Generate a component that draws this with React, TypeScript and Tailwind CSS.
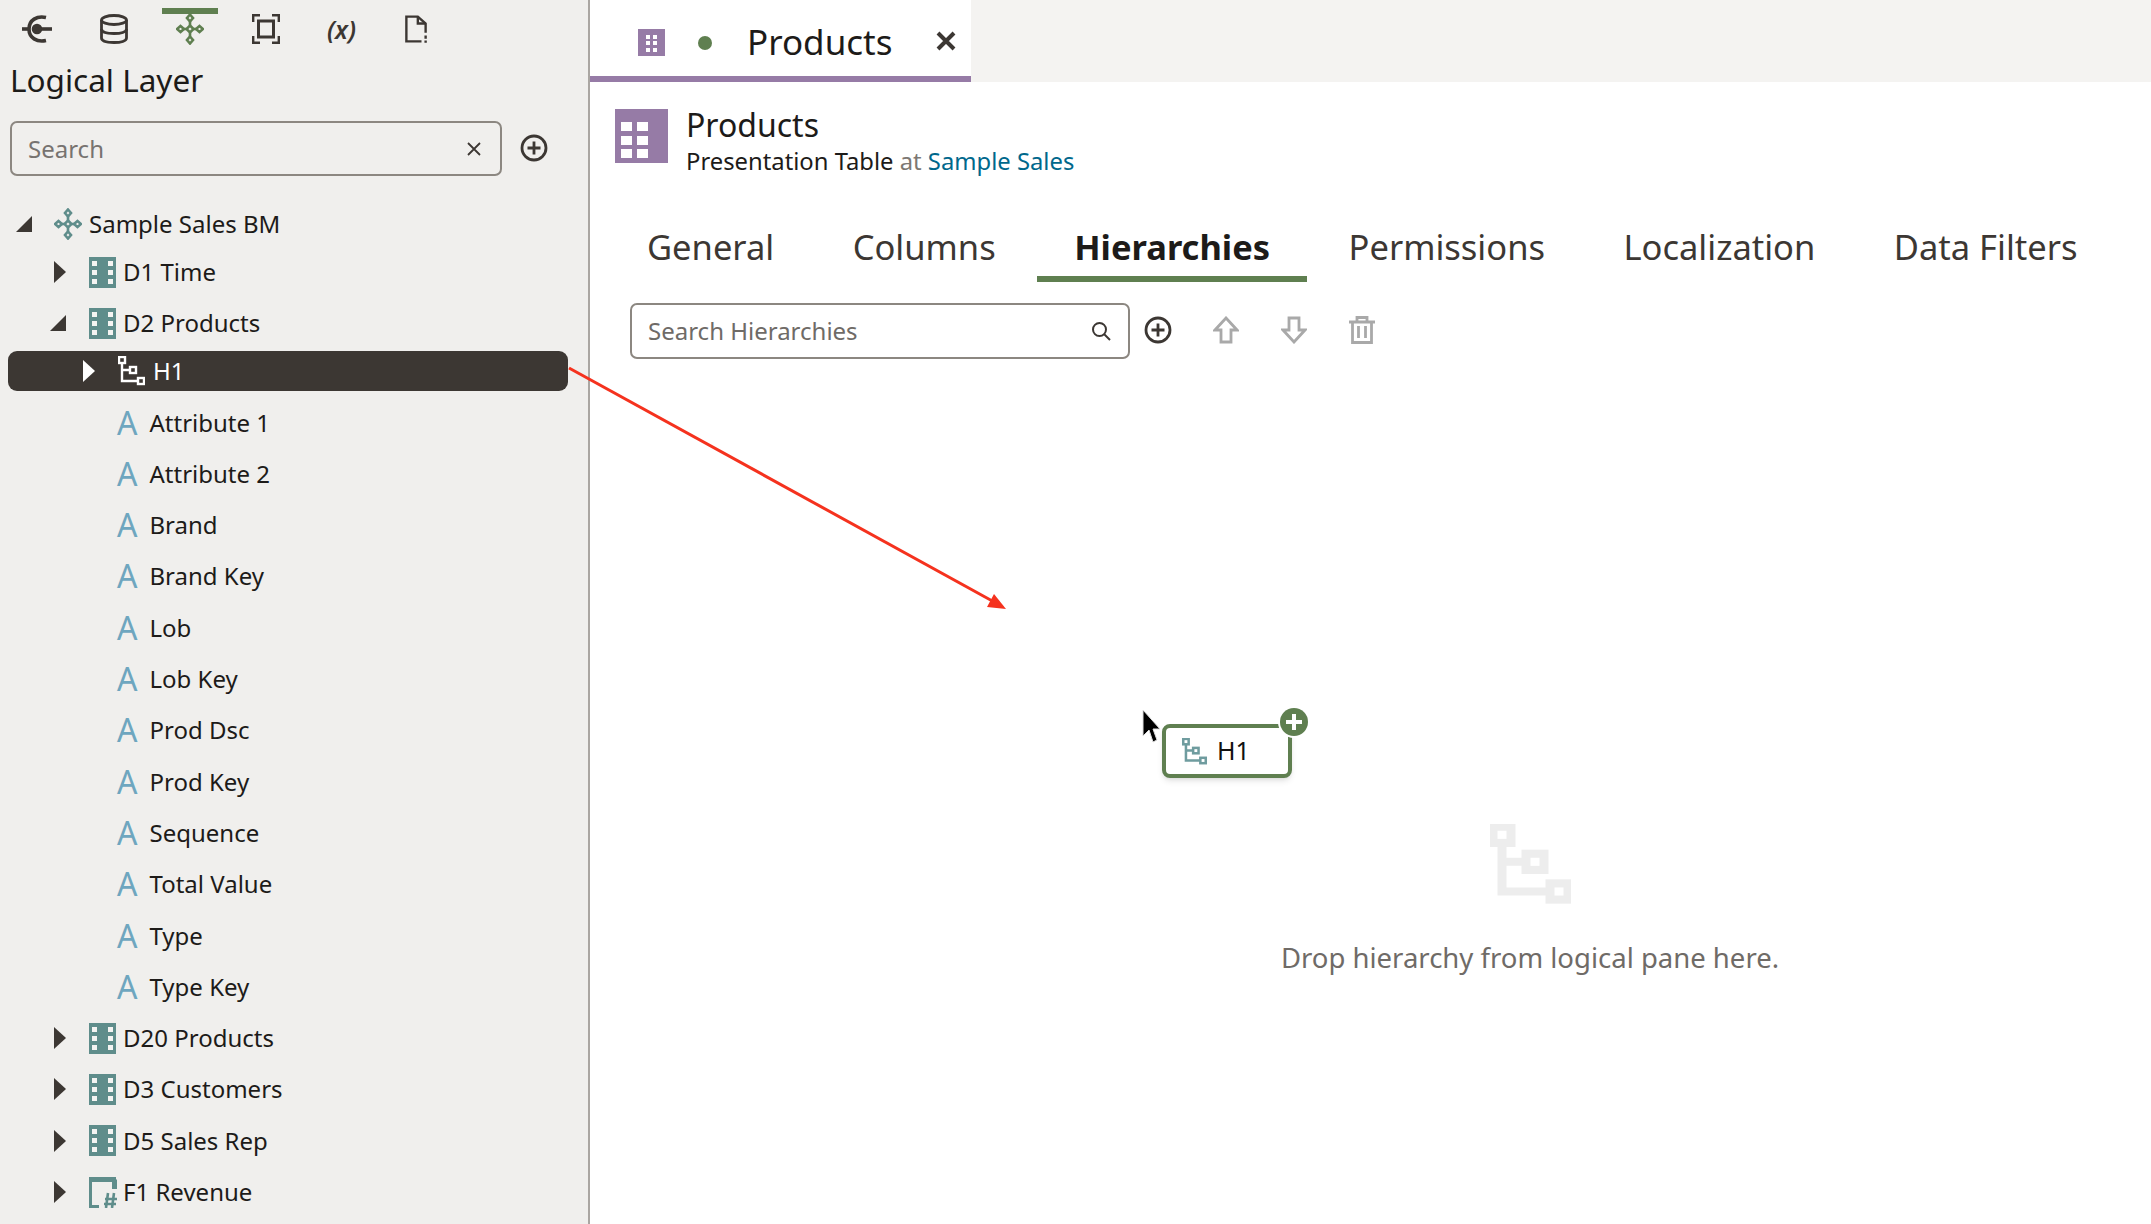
import React from 'react';

const TEAL = '#5f8d8b';
const PURPLE = '#967ba6';
const GREEN = '#5f7f50';
const DARK = '#3c3733';

const NodeIcon = ({ color, className }: { color: string; className: string }) => (
  <svg viewBox="0 0 28 32" className={className} fill="none" stroke={color} strokeWidth="2.6">
    <path d="M14 1.5 17 5 14 8.5 11 5Z" />
    <path d="M14 23.5 17 27 14 30.5 11 27Z" />
    <path d="M4.5 13 8 16 4.5 19 1 16Z" />
    <path d="M23.5 13 27 16 23.5 19 20 16Z" />
    <path d="M14 12.5 17.5 16 14 19.5 10.5 16Z" />
    <path d="M14 8.5V12.5M14 19.5V23.5M8 16H10.5M17.5 16H20" />
  </svg>
);

const TableIcon = () => (
  <svg viewBox="0 0 27 31" className="w-[27px] h-[31px]">
    <rect width="27" height="31" fill={TEAL} />
    {[4, 13, 22].map((y) => (
      <g key={y} fill="#f4f4f2">
        <rect x="3" y={y} width="5" height="5" />
        <rect x="19" y={y} width="5" height="5" />
      </g>
    ))}
  </svg>
);

const FactIcon = () => (
  <svg viewBox="0 0 28 31" className="w-[28px] h-[31px]" fill="none" stroke={TEAL}>
    <path d="M1.5 4V29.5H10" strokeWidth="3" />
    <path d="M0 2.5H27M25.5 2.5V12" strokeWidth="5" />
    <path d="M16 22H28M15 27H27M19 16 17 31M25 16 23 31" strokeWidth="2.6" />
  </svg>
);

const HierarchyIcon = ({ color, className, width = 2.4 }: { color: string; className: string; width?: number }) => (
  <svg viewBox="0 0 27 30" className={className} fill="none" stroke={color} strokeWidth={width}>
    <rect x="1" y="1" width="6" height="6" />
    <rect x="12" y="11" width="6" height="6" />
    <rect x="20" y="22" width="6" height="6" />
    <path d="M4 7V25H20M4 14H12" />
  </svg>
);

const GridIcon = ({ className }: { className: string }) => (
  <svg viewBox="0 0 53 54" className={className}>
    <rect width="53" height="54" fill={PURPLE} />
    {[14, 28, 41].map((y) => (
      <g key={y} fill="#fff">
        <rect x="6" y={y - 1} width="11" height="9" />
        <rect x="22" y={y - 1} width="11" height="9" />
      </g>
    ))}
  </svg>
);

const TabGridIcon = () => (
  <svg viewBox="0 0 27 27" className="w-[27px] h-[27px]">
    <rect width="27" height="27" fill={PURPLE} />
    {[6, 12, 19].map((y) => (
      <g key={y} fill="#fff">
        <rect x="8" y={y} width="4" height="4" />
        <rect x="15" y={y} width="4" height="4" />
      </g>
    ))}
  </svg>
);

const PlusCircle = () => (
  <svg viewBox="0 0 28 28" className="w-[28px] h-[28px]" fill="none" stroke={DARK} strokeWidth="2.8">
    <circle cx="14" cy="14" r="12" />
    <path d="M14 7.5V20.5M7.5 14H20.5" />
  </svg>
);

const Caret = ({ open, light }: { open?: boolean; light?: boolean }) =>
  open ? (
    <svg viewBox="0 0 16 16" className="w-[16px] h-[16px]">
      <path d="M16 0V16H0Z" fill={DARK} />
    </svg>
  ) : (
    <svg viewBox="0 0 12 22" className="w-[12px] h-[22px]">
      <path d="M0 0 12 11 0 22Z" fill={light ? '#fff' : DARK} />
    </svg>
  );

const Toolbar = () => (
  <div className="relative h-[58px] flex items-center pl-[22px] gap-[48px]">
    <svg viewBox="0 0 30 30" className="w-[30px] h-[30px]" fill="none" stroke={DARK} strokeWidth="3.6">
      <path d="M24 3.5C15 1.5 7 6 7 15S15 28.500 24 26.500" />
      <path d="M0 15H7" />
      <path d="M14 15H30" />
      <circle cx="15" cy="15" r="3.500" fill={DARK} />
    </svg>
    <svg viewBox="0 0 28 30" className="w-[28px] h-[30px]" fill="none" stroke={DARK} strokeWidth="2.8">
      <ellipse cx="14" cy="6" rx="12.500" ry="4.500" />
      <path d="M1.500 6V24C1.500 27 7 28.500 14 28.500S26.500 27 26.500 24V6" />
      <path d="M1.500 15C1.500 18 7 19.500 14 19.500S26.500 18 26.500 15" />
    </svg>
    <div className="relative w-[28px] h-[32px]">
      <div className="absolute top-[-5px] left-[-14px] w-[56px] h-[6px] bg-[#5f7f50]" />
      <NodeIcon color={GREEN} className="w-[28px] h-[32px]" />
    </div>
    <svg viewBox="0 0 28 30" className="w-[28px] h-[30px]" fill="none" stroke={DARK} strokeWidth="2.400">
      <path d="M1.200 8V1.200H8M20 1.200H26.800V8M26.800 22V28.800H20M8 28.800H1.200V22" />
      <rect x="6.500" y="7" width="15" height="16" strokeWidth="3" />
    </svg>
    <span className="w-[28px] -ml-[1px] text-[25px] leading-none font-semibold italic text-[#3c3733] whitespace-nowrap">(x)</span>
    <svg viewBox="0 0 24 30" className="w-[22px] h-[30px] ml-[2px]" fill="none" stroke={DARK} strokeWidth="2.600">
      <path d="M18 28.500H1.500V1.500H14L22.500 9V19" />
      <path d="M14 1.500V9H22.500" />
      <path d="M22.500 22V25.500M22.500 27.500V30" />
    </svg>
  </div>
);

type RowProps = { label: string; tight?: boolean };

const TableRow = ({ label, fact, open, tight }: RowProps & { fact?: boolean; open?: boolean }) => (
  <div className={`h-[40px] flex items-center text-[24px] text-[#1d1b19] ${tight ? 'mt-[8px]' : 'mt-[11.3px]'}`}>
    <span className="w-[89px] flex justify-end pr-[23px]">
      <Caret open={open} />
    </span>
    {fact ? <FactIcon /> : <TableIcon />}
    <span className={fact ? 'ml-[6px]' : 'ml-[7px]'}>{label}</span>
  </div>
);

const AttrRow = ({ label }: RowProps) => (
  <div className="h-[40px] mt-[11.3px] flex items-center text-[24px] text-[#1d1b19]">
    <span className="ml-[117px] w-[32.500px] font-normal text-[32px] leading-none text-[#6ea6bf]">A</span>
    <span>{label}</span>
  </div>
);

const attrs = [
  'Attribute 1',
  'Attribute 2',
  'Brand',
  'Brand Key',
  'Lob',
  'Lob Key',
  'Prod Dsc',
  'Prod Key',
  'Sequence',
  'Total Value',
  'Type',
  'Type Key',
];

const Sidebar = () => (
  <aside className="w-[590px] h-full shrink-0 bg-[#f0efed] border-r-2 border-[#aaa6a2] overflow-hidden">
    <Toolbar />
    <h2 className="pl-[10px] h-[48px] text-[31.5px] leading-[43px] text-[#1d1b19]">Logical Layer</h2>
    <div className="mt-[15px] flex items-center">
      <div className="ml-[10px] w-[492px] h-[55px] rounded-[7px] border-2 border-[#8c8781] flex items-center justify-between pl-[16px] pr-[18px]">
        <span className="text-[24px] text-[#777370]">Search</span>
        <svg viewBox="0 0 16 16" className="w-[16px] h-[16px]" fill="none" stroke={DARK} strokeWidth="1.800">
          <path d="M2 2 14 14M14 2 2 14" />
        </svg>
      </div>
      <span className="ml-[18px] -mt-[2px]">
        <PlusCircle />
      </span>
    </div>
    <div className="mt-[28px]">
      <div className="h-[40px] flex items-center text-[24px] text-[#1d1b19]">
        <span className="ml-[16px] w-[38px]">
          <Caret open />
        </span>
        <NodeIcon color={TEAL} className="w-[28px] h-[32px]" />
        <span className="ml-[7px]">Sample Sales BM</span>
      </div>
      <TableRow label="D1 Time" tight />
      <TableRow label="D2 Products" open />
      <div className="ml-[8px] mr-[20px] mt-[8px] h-[40px] rounded-[9px] bg-[#3c3733] flex items-center text-[24px] text-white">
        <span className="ml-[75px] w-[35px]">
          <Caret light />
        </span>
        <HierarchyIcon color="#fff" className="w-[27px] h-[30px]" />
        <span className="ml-[8px]">H1</span>
      </div>
      {attrs.map((a) => (
        <AttrRow key={a} label={a} />
      ))}
      <TableRow label="D20 Products" />
      <TableRow label="D3 Customers" />
      <TableRow label="D5 Sales Rep" />
      <TableRow label="F1 Revenue" fact />
    </div>
  </aside>
);

const tabs = ['General', 'Columns', 'Hierarchies', 'Permissions', 'Localization', 'Data Filters'];

const Main = () => (
  <main className="flex-1 h-full bg-white flex flex-col">
    <div className="h-[82px] shrink-0 bg-[#f4f3f1]">
      <div className="w-[381px] h-[82px] bg-white border-b-[6px] border-[#967ba6] flex items-center pl-[48px] pt-[9px]">
        <TabGridIcon />
        <span className="ml-[33px] w-[14px] h-[14px] rounded-full bg-[#5f7f50]" />
        <span className="ml-[35px] text-[35px] text-[#1d1b19]">Products</span>
        <svg viewBox="0 0 20 20" className="ml-[44px] -mt-[3px] w-[20px] h-[20px]" fill="none" stroke={DARK} strokeWidth="4">
          <path d="M2 2 18 18M18 2 2 18" />
        </svg>
      </div>
    </div>

    <div className="mt-[27px] ml-[25px] h-[54px] flex">
      <GridIcon className="w-[53px] h-[54px]" />
      <div className="ml-[18px] -mt-[4px]">
        <div className="text-[32px] leading-[40px] text-[#1d1b19]">Products</div>
        <div className="text-[23.800px] leading-[32px] text-[#1d1b19]">
          Presentation Table <span className="text-[#7d7873]">at</span>{' '}
          <span className="text-[#00688c]">Sample Sales</span>
        </div>
      </div>
    </div>

    <div className="mt-[59px] ml-[20px] h-[60px] flex gap-[4.500px]">
      {tabs.map((t) => (
        <div
          key={t}
          className={`px-[37px] h-[60px] text-[34.500px] leading-[50px] whitespace-nowrap ${
            t === 'Hierarchies' ? 'font-bold text-[#1d1b19] border-b-[6px] border-[#5f7f50]' : 'text-[#3c3733]'
          }`}
        >
          {t}
        </div>
      ))}
    </div>

    <div className="mt-[21px] ml-[40px] flex items-center">
      <div className="w-[500px] h-[56px] rounded-[7px] border-2 border-[#8c8781] flex items-center justify-between pl-[16px] pr-[17px]">
        <span className="text-[24px] text-[#6f6b67]">Search Hierarchies</span>
        <svg viewBox="0 0 20 20" className="w-[20px] h-[20px]" fill="none" stroke={DARK} strokeWidth="2">
          <circle cx="8.500" cy="8.500" r="6.500" />
          <path d="M13 13 19 19" />
        </svg>
      </div>
      <span className="ml-[14px] -mt-[2px]">
        <PlusCircle />
      </span>
      <svg viewBox="0 0 26 28" className="ml-[41px] -mt-[2px] w-[26px] h-[28px]" fill="none" stroke="#a9a9a9" strokeWidth="2.800">
        <path d="M13 2 24 14H18V26H8V14H2Z" />
      </svg>
      <svg viewBox="0 0 26 28" className="ml-[42px] -mt-[2px] w-[26px] h-[28px]" fill="none" stroke="#a9a9a9" strokeWidth="2.800">
        <path d="M13 26 24 14H18V2H8V14H2Z" />
      </svg>
      <svg viewBox="0 0 26 28" className="ml-[42px] -mt-[2px] w-[26px] h-[28px]" fill="none" stroke="#a9a9a9" strokeWidth="2.800">
        <path d="M0 6H26M8 6V1.500H18V6M3.500 6V26.500H22.500V6M9.500 10V22M16.500 10V22" />
      </svg>
    </div>

    <div className="mt-[465px] pl-[319px] flex flex-col items-center">
      <svg viewBox="0 0 27 30" className="w-[81px] h-[81px]" fill="none" stroke="#ededed" strokeWidth="3" preserveAspectRatio="none">
        <rect x="1" y="1" width="6" height="6" />
        <rect x="12" y="11" width="6" height="6" />
        <rect x="20" y="22" width="6" height="6" />
        <path d="M4 7V25H20M4 14H12" />
      </svg>
      <div className="mt-[35px] text-[27.500px] leading-[36px] text-[#6f6b67]">Drop hierarchy from logical pane here.</div>
    </div>
  </main>
);

export default function App() {
  return (
    <div className="relative w-[2151px] h-[1224px] overflow-hidden flex font-['Noto_Sans',sans-serif]">
      <Sidebar />
      <Main />

      {/* red arrow on top of the capture */}
      <svg className="absolute left-0 top-0 w-[2151px] h-[1224px] pointer-events-none" viewBox="0 0 2151 1224" fill="none">
        <path d="M569 368 996 603" stroke="#f5321e" strokeWidth="3" />
        <path d="M1006 609 987 607 994 594Z" fill="#f5321e" />
      </svg>

      {/* dragged chip */}
      <div className="absolute left-[1162px] top-[724px] w-[130px] h-[54px] rounded-[8px] border-4 border-[#5f7f50] bg-white shadow-md flex items-center pl-[15px] text-[25px] text-[#111]">
        <HierarchyIcon color="#6f9c9f" className="w-[27px] h-[27px]" width={2.8} />
        <span className="ml-[9px]">H1</span>
      </div>
      <div className="absolute left-[1278px] top-[706px] w-[32px] h-[32px] rounded-full bg-white flex items-center justify-center">
        <svg viewBox="0 0 28 28" className="w-[28px] h-[28px]">
          <circle cx="14" cy="14" r="14" fill={GREEN} />
          <path d="M14 6V22M6 14H22" stroke="#fff" strokeWidth="4" />
        </svg>
      </div>
      <svg viewBox="0 0 18 36" className="absolute left-[1142px] top-[709px] w-[18px] h-[36px]">
        <path d="M1 1V27L7 21 11 33 15 31 11 20H18Z" fill="#000" stroke="#ddd" strokeWidth="1" />
      </svg>
    </div>
  );
}
